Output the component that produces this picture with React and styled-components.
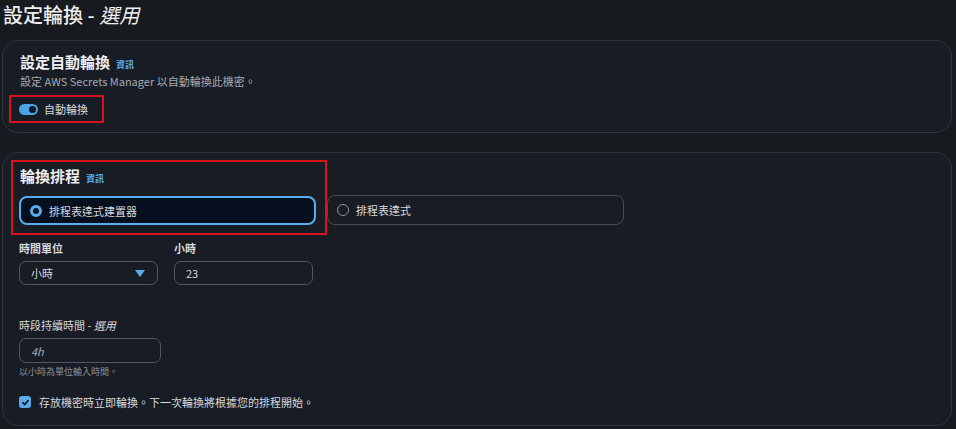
import React from 'react'
import styled, { createGlobalStyle } from 'styled-components'

const GlobalStyle = createGlobalStyle`
  html, body {
    margin: 0;
    padding: 0;
    background: #171a1f;
  }
  body {
    font-family: "Noto Sans CJK TC", "Noto Sans", "Liberation Sans", sans-serif;
    color: #d5d8dc;
  }
`

const Page = styled.div`
  width: 956px;
  height: 429px;
  overflow: hidden;
  padding: 3px 4px 0 2px;
  box-sizing: border-box;
  font-family: "Noto Sans CJK TC", "Noto Sans CJK KR", sans-serif;
  font-feature-settings: "locl" 1;
`

const PageTitle = styled.h1`
  margin: 0 0 13px 1px;
  font-size: 20px;
  line-height: 24px;
  font-weight: 500;
  color: #eceef0;
  em {
    font-style: italic;
    font-weight: 400;
  }
`

const Card = styled.section`
  background: #181c25;
  border: 1px solid #2d323b;
  border-radius: 16px;
  padding: ${p => p.$pad};
  margin-bottom: ${p => p.$gap || 0}px;
  height: ${p => p.$height}px;
  box-sizing: border-box;
`

const Highlight = styled.div`
  border: 2px solid #d4141c;
  box-sizing: border-box;
  width: ${p => p.$width}px;
  padding: ${p => p.$pad};
  margin: ${p => p.$margin};
`

const Heading = styled.h2`
  margin: 0;
  margin-left: ${p => p.$indent || 0}px;
  height: 18px;
  font-size: 15px;
  line-height: 18px;
  font-weight: 700;
  color: #eceef0;
  display: flex;
  align-items: baseline;
  gap: 6px;
`

const InfoLink = styled.a`
  font-size: 9px;
  line-height: 1;
  font-weight: 700;
  color: #5ab0f0;
  text-decoration: none;
`

const Description = styled.p`
  margin: 3px 0 0;
  font-size: 11px;
  line-height: 14px;
  color: #a3a9b2;
`

const ToggleRow = styled.label`
  display: flex;
  align-items: center;
  gap: 6px;
  font-size: 11px;
  line-height: 24px;
  color: #d5d8dc;
`

const Toggle = styled.span`
  width: 19px;
  height: 11px;
  border-radius: 6px;
  background: #4ba3e6;
  position: relative;
  &::after {
    content: '';
    position: absolute;
    right: 2px;
    top: 2px;
    width: 7px;
    height: 7px;
    border-radius: 50%;
    background: #0f1620;
  }
`

const ScheduleRow = styled.div`
  display: flex;
  align-items: flex-end;
  margin-left: -8px;
`

const RadioCard = styled.div`
  width: 297px;
  height: ${p => (p.$selected ? 29 : 30)}px;
  box-sizing: border-box;
  display: flex;
  align-items: center;
  gap: 7px;
  padding-left: 9px;
  border-radius: 8px;
  border: ${p => (p.$selected ? '2px solid #58aceb' : '1px solid #474c55')};
  background: ${p => (p.$selected ? '#060f1d' : 'transparent')};
  margin-top: ${p => (p.$selected ? 11 : 0)}px;
  margin-bottom: ${p => (p.$selected ? 0 : 10)}px;
  font-size: 11px;
  color: #d5d8dc;
`

const RadioDot = styled.span`
  width: 12px;
  height: 12px;
  border-radius: 50%;
  box-sizing: border-box;
  flex: none;
  border: ${p => (p.$checked ? '3.5px solid #58aceb' : '1.5px solid #8d9199')};
  background: ${p => (p.$checked ? '#0b1320' : 'transparent')};
`

const FieldGrid = styled.div`
  display: flex;
  gap: 16px;
  margin-top: 6px;
`

const Field = styled.div`
  display: flex;
  flex-direction: column;
  gap: 6px;
  margin-top: ${p => p.$top || 0}px;
`

const FieldLabel = styled.span`
  font-size: 11px;
  line-height: 14px;
  font-weight: ${p => (p.$bold ? 700 : 400)};
  color: #d5d8dc;
  em {
    font-style: italic;
  }
`

const InputBox = styled.div`
  width: ${p => p.$width}px;
  height: ${p => p.$height}px;
  box-sizing: border-box;
  border: 1px solid #50565f;
  border-radius: 7px;
  display: flex;
  align-items: center;
  justify-content: space-between;
  padding: 0 11px;
  font-size: 11px;
  color: ${p => (p.$placeholder ? '#a3a9b2' : '#d5d8dc')};
  font-style: ${p => (p.$placeholder ? 'italic' : 'normal')};
`

const Caret = styled.span`
  width: 0;
  height: 0;
  border-left: 5px solid transparent;
  border-right: 5px solid transparent;
  border-top: 7px solid #58aceb;
  margin-right: 1px;
`

const Hint = styled.span`
  font-size: 9px;
  line-height: 12px;
  color: #8d939b;
  margin-top: -3px;
`

const CheckRow = styled.label`
  display: flex;
  align-items: center;
  gap: 8px;
  margin-top: 16px;
  font-size: 11px;
  line-height: 16px;
  color: #d5d8dc;
`

const CheckBox = styled.span`
  width: 12px;
  height: 12px;
  border-radius: 3px;
  background: #58aceb;
  display: flex;
  align-items: center;
  justify-content: center;
`

export default function App () {
  return (
    <Page lang='zh-Hant'>
      <GlobalStyle />
      <PageTitle>
        設定輪換 - <em>選用</em>
      </PageTitle>

      <Card $pad='12px 16px 0 17px' $height={93} $gap={19}>
        <Heading>
          設定自動輪換 <InfoLink>資訊</InfoLink>
        </Heading>
        <Description>設定 AWS Secrets Manager 以自動輪換此機密。</Description>
        <Highlight $width={95} $pad='0 0 0 8px' $margin='7px 0 0 -11px'>
          <ToggleRow>
            <Toggle />
            自動輪換
          </ToggleRow>
        </Highlight>
      </Card>

      <Card $pad='7px 16px 0 16px' $height={274}>
        <ScheduleRow>
          <Highlight $width={316} $pad='5px 0 8px 6px' $margin='0'>
            <Heading $indent={1}>
              輪換排程 <InfoLink>資訊</InfoLink>
            </Heading>
            <RadioCard $selected>
              <RadioDot $checked />
              排程表達式建置器
            </RadioCard>
          </Highlight>
          <RadioCard>
            <RadioDot />
            排程表達式
          </RadioCard>
        </ScheduleRow>

        <FieldGrid>
          <Field>
            <FieldLabel $bold>時間單位</FieldLabel>
            <InputBox $width={139} $height={24}>
              小時
              <Caret />
            </InputBox>
          </Field>
          <Field>
            <FieldLabel $bold>小時</FieldLabel>
            <InputBox $width={139} $height={24}>23</InputBox>
          </Field>
        </FieldGrid>

        <Field $top={33}>
          <FieldLabel>
            時段持續時間 - <em>選用</em>
          </FieldLabel>
          <InputBox $width={142} $height={25} $placeholder>4h</InputBox>
          <Hint>以小時為單位輸入時間。</Hint>
        </Field>

        <CheckRow>
          <CheckBox>
            <svg width='9' height='9' viewBox='0 0 10 10' fill='none'>
              <path d='M2 5.2 L4.2 7.3 L8 2.8' stroke='#0f1620' strokeWidth='1.8' strokeLinecap='round' strokeLinejoin='round' />
            </svg>
          </CheckBox>
          存放機密時立即輪換。下一次輪換將根據您的排程開始。
        </CheckRow>
      </Card>
    </Page>
  )
}
